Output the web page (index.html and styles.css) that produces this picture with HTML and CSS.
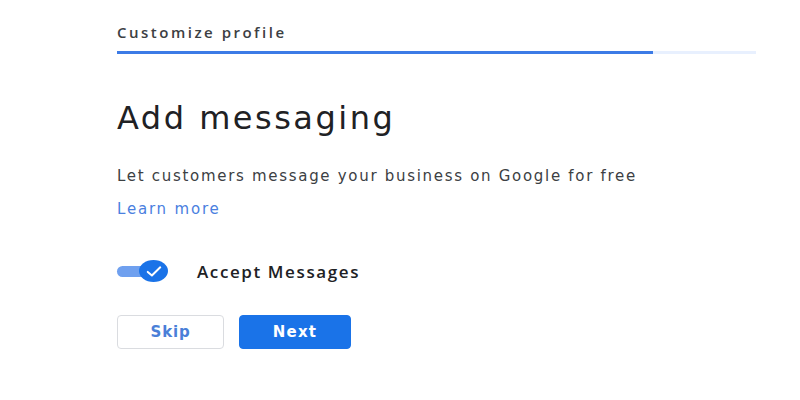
FILE: index.html
```html
<!DOCTYPE html>
<html lang="en">
<head>
<meta charset="utf-8">
<title>Add messaging</title>
<link rel="stylesheet" href="styles.css">
</head>
<body>
<main class="page">
  <header class="step-header">
    <div class="step-title">Customize profile</div>
    <div class="progress">
      <div class="progress-fill"></div>
    </div>
  </header>
  <h1 class="heading">Add messaging</h1>
  <p class="desc">Let customers message your business on Google for free</p>
  <a class="learn" href="#">Learn more</a>
  <div class="toggle-row">
    <span class="toggle">
      <span class="track"></span>
      <span class="thumb">
        <svg viewBox="0 0 24 18" width="20" height="15"><path d="M4.5 9.5l5 4.2L19.5 4" fill="none" stroke="#fff" stroke-width="2.4" stroke-linecap="round" stroke-linejoin="round"/></svg>
      </span>
    </span>
    <span class="toggle-label">Accept Messages</span>
  </div>
  <div class="actions">
    <button class="btn btn-outline">Skip</button>
    <button class="btn btn-primary">Next</button>
  </div>
</main>
</body>
</html>
```
FILE: styles.css
```css
html, body {
  margin: 0;
  padding: 0;
  background: #ffffff;
}
body {
  font-family: "DejaVu Sans", "Open Sans", sans-serif;
  color: #3c4043;
}
.page {
  padding: 23px 0 0 117px;
  width: 640px;
}
.step-header {
  display: flex;
  flex-direction: column;
}
.step-title {
  font-family: "Open Sans", "DejaVu Sans", sans-serif;
  font-size: 15px;
  font-weight: 600;
  letter-spacing: 2.5px;
  color: #3c4043;
  line-height: 18px;
}
.progress {
  margin-top: 10px;
  height: 3px;
  width: 639px;
  background: #e8f0fe;
}
.progress-fill {
  width: 536px;
  height: 100%;
  background: #3c7be6;
}
.heading {
  margin: 46px 0 0;
  font-size: 32px;
  font-weight: 400;
  letter-spacing: 2.5px;
  line-height: 36px;
  color: #202124;
}
.desc {
  margin: 30px 0 0;
  font-size: 15px;
  letter-spacing: 1.7px;
  line-height: 20px;
  color: #3c4043;
}
.learn {
  display: inline-block;
  margin-top: 13px;
  font-size: 15px;
  letter-spacing: 1.8px;
  line-height: 20px;
  color: #4a80e0;
  text-decoration: none;
}
.toggle-row {
  display: flex;
  align-items: center;
  height: 28px;
  margin-top: 38px;
  gap: 29px;
}
.toggle {
  position: relative;
  width: 51px;
  height: 22px;
  display: inline-block;
}
.track {
  position: absolute;
  left: 0;
  top: 6px;
  width: 40px;
  height: 11px;
  border-radius: 6px;
  background: #6fa0ef;
}
.thumb {
  position: absolute;
  right: 0;
  top: 0;
  width: 29px;
  height: 22px;
  border-radius: 50%;
  background: #1a73e8;
  display: flex;
  align-items: center;
  justify-content: center;
}
.toggle-label {
  font-family: "Open Sans", "DejaVu Sans", sans-serif;
  font-size: 17px;
  font-weight: 600;
  letter-spacing: 1.6px;
  color: #202124;
}
.actions {
  display: flex;
  gap: 15px;
  margin-top: 30px;
}
.btn {
  font-family: inherit;
  font-size: 15px;
  font-weight: 700;
  height: 34px;
  border-radius: 4px;
  cursor: pointer;
}
.btn-outline {
  width: 107px;
  background: #ffffff;
  border: 1px solid #dadce0;
  color: #4a7fd8;
  letter-spacing: 0.8px;
}
.btn-primary {
  width: 112px;
  background: #1a73e8;
  border: 1px solid #1a73e8;
  color: #ffffff;
  letter-spacing: 1.2px;
}
```
